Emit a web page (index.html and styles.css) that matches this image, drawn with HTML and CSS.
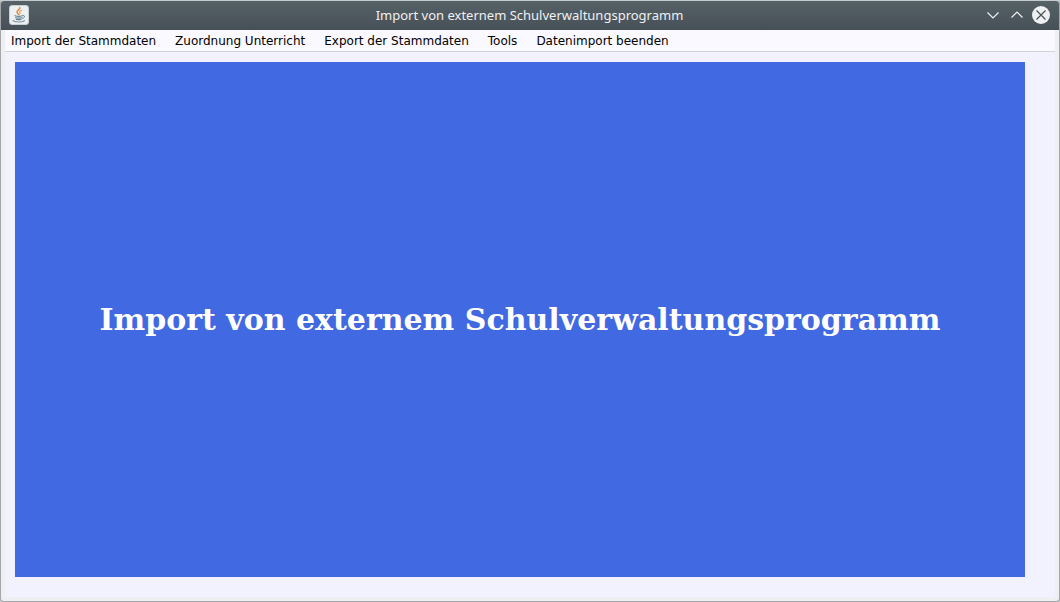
FILE: index.html
```html
<!DOCTYPE html>
<html lang="de">
<head>
<meta charset="utf-8">
<title>Import von externem Schulverwaltungsprogramm</title>
<link rel="stylesheet" href="styles.css">
</head>
<body>
<div class="window">
  <header class="titlebar">
    <svg class="app-icon" viewBox="0 0 20 20" aria-hidden="true">
      <rect x="0.5" y="0.5" width="19" height="19" rx="2.5" fill="#edf0f1" stroke="#c9ced1"/>
      <g fill="none" stroke-linecap="round">
        <path d="M10.800 2.500c1 1.800-3.400 2.800-2.800 4.700c.2.800 1.200 1.300 1.400 2.200" stroke="#e58a45" stroke-width="1.500"/>
        <path d="M12.800 5.200c-2.300 1-2.700 1.800-1.900 2.700c.4.500.1 1-.3 1.500" stroke="#e9a06a" stroke-width="1.100"/>
        <path d="M6 10.700c2.300.8 5.200.8 7.300 0M6.600 12.700c2 .6 4.200.6 6.200 0M7.300 14.400c1.600.4 3.300.4 4.700 0" stroke="#668596" stroke-width="1.200"/>
        <path d="M13.900 10.500c2.600-.5 2.300 2.200-.3 2.900" stroke="#668596"/>
        <path d="M4.200 15.700c2.600 1.700 8.600 1.700 11.200 0" stroke="#7892a0" stroke-width="1.200"/>
      </g>
    </svg>
    <h1 class="title">Import von externem Schulverwaltungsprogramm</h1>
    <div class="controls">
      <button class="control" type="button" aria-label="Minimieren">
        <svg viewBox="0 0 18 18"><path d="M3.500 6.500L9 12l5.500-5.500" fill="none" stroke="#eff0f1" stroke-width="1.200"/></svg>
      </button>
      <button class="control" type="button" aria-label="Maximieren">
        <svg viewBox="0 0 18 18"><path d="M3.500 11.500L9 6l5.500 5.500" fill="none" stroke="#eff0f1" stroke-width="1.200"/></svg>
      </button>
      <button class="control" type="button" aria-label="Schließen">
        <svg viewBox="0 0 18 18"><circle cx="9" cy="9" r="9" fill="#eff0f1"/><path d="M4.500 4.500l9 9m0-9l-9 9" fill="none" stroke="#475057" stroke-width="1.200"/></svg>
      </button>
    </div>
  </header>
  <div class="frame">
    <nav class="menubar">
      <button class="menu" type="button">Import der Stammdaten</button>
      <button class="menu" type="button">Zuordnung Unterricht</button>
      <button class="menu" type="button">Export der Stammdaten</button>
      <button class="menu" type="button">Tools</button>
      <button class="menu" type="button">Datenimport beenden</button>
    </nav>
    <main class="content">
      <section class="banner">
        <h2 class="banner-text">Import von externem Schulverwaltungsprogramm</h2>
      </section>
    </main>
  </div>
</div>
</body>
</html>
```
FILE: styles.css
```css
* {
  box-sizing: border-box;
}

body {
  margin: 0;
  background: #c5cacd;
}

.window {
  display: flex;
  flex-direction: column;
  min-height: 100vh;
  border: 1px solid #a5a6a9;
  border-top-color: #c3cbcf;
  border-radius: 4px;
  overflow: hidden;
  background: #efeff2;
}

.titlebar {
  display: grid;
  grid-template-columns: 1fr auto 1fr;
  align-items: center;
  height: 29px;
  padding: 0 9px 1px 8px;
  background: linear-gradient(#566168, #475057);
  color: #eff0f1;
}

.app-icon {
  width: 20px;
  height: 20px;
}

.title {
  margin: 0;
  font: 400 13px/18px "Noto Sans", sans-serif;
}

.controls {
  display: flex;
  justify-content: flex-end;
  gap: 6px;
}

.control {
  width: 18px;
  height: 18px;
  padding: 0;
  border: 0;
  background: none;
}

.control svg {
  display: block;
}

.frame {
  display: flex;
  flex: 1;
  flex-direction: column;
  padding: 0 4px 4px;
}

.menubar {
  display: flex;
  gap: 19px;
  padding: 2px 6px 0;
  border-bottom: 1px solid #d2d2dc;
  background: #faf9ff;
}

.menu {
  padding: 0;
  border: 0;
  background: none;
  color: #000;
  font: 12px/19px "DejaVu Sans", sans-serif;
}

.content {
  display: flex;
  flex: 1;
  padding: 10px 30px 20px 10px;
  background: #f2f2ff;
}

.banner {
  display: grid;
  flex: 1;
  place-items: center;
  background: #4169e1;
  color: #fff;
}

.banner-text {
  margin: 0;
  font: 700 30px/36px "DejaVu Serif", serif;
  text-align: center;
}
```
